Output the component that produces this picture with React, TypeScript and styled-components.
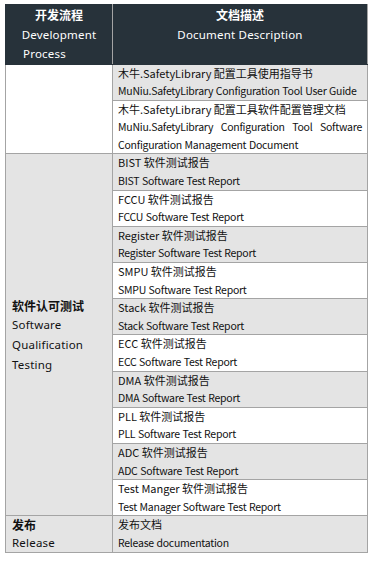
import React from 'react';
import styled, { createGlobalStyle } from 'styled-components';

const GlobalStyle = createGlobalStyle`
  html, body {
    margin: 0;
    padding: 0;
    background: #ffffff;
  }
`;

interface DocRow {
  zh: string;
  en: string;
  justify?: boolean;
}

const setupDocs: DocRow[] = [
  { zh: '木牛.SafetyLibrary 配置工具使用指导书', en: 'MuNiu.SafetyLibrary Configuration Tool User Guide' },
  {
    zh: '木牛.SafetyLibrary 配置工具软件配置管理文档',
    en: 'MuNiu.SafetyLibrary Configuration Tool Software Configuration Management Document',
    justify: true,
  },
];

const testModules = ['BIST', 'FCCU', 'Register', 'SMPU', 'Stack', 'ECC', 'DMA', 'PLL', 'ADC'];

const testDocs: DocRow[] = [
  ...testModules.map((m) => ({ zh: `${m} 软件测试报告`, en: `${m} Software Test Report` })),
  { zh: 'Test Manger 软件测试报告', en: 'Test Manager Software Test Report' },
];

const Page = styled.div`
  padding: 4px 4px 0 5px;
`;

const Table = styled.table`
  width: 363px;
  border-collapse: collapse;
  table-layout: fixed;
  border: 1px solid #a4a4a4;
`;

const HeadCell = styled.th`
  background: #27323a;
  color: #ffffff;
  font-family: 'Noto Sans', 'Noto Sans CJK SC', sans-serif;
  font-size: 11.5px;
  font-weight: 400;
  line-height: 19.5px;
  padding: 0 5px;
  vertical-align: top;
  text-align: center;
  border: 1px solid #27323a;
  border-right-color: #a4a4a4;
`;

const HeadZh = styled.div`
  font-family: 'Noto Sans CJK SC', sans-serif;
  font-weight: 700;
  font-size: 12px;
`;

const HeadEn = styled.div<{ $left?: boolean }>`
  text-align: ${(p) => (p.$left ? 'left' : 'center')};
  padding-left: ${(p) => (p.$left ? '12px' : '0')};
  letter-spacing: 0.2px;
`;

const ProcessCell = styled.td<{ $shade?: boolean; $loose?: boolean }>`
  background: ${(p) => (p.$shade ? '#e4e4e4' : '#ffffff')};
  border: 1px solid #a4a4a4;
  padding: 0 6px;
  vertical-align: middle;
  color: #111;
  font-family: 'Noto Sans', 'Noto Sans CJK SC', sans-serif;
  font-size: 11.5px;
  line-height: ${(p) => (p.$loose ? '19.6px' : '17.6px')};
  letter-spacing: 0.2px;
`;

const ProcessZh = styled.div`
  font-family: 'Noto Sans CJK SC', sans-serif;
  font-weight: 700;
  font-size: 12px;
  letter-spacing: 0;
`;

const DocCell = styled.td<{ $shade?: boolean; $justify?: boolean }>`
  background: ${(p) => (p.$shade ? '#e4e4e4' : '#ffffff')};
  border: 1px solid #a4a4a4;
  padding: 0 5px 0 5px;
  vertical-align: middle;
  color: #111;
  font-family: 'Noto Sans CJK SC', sans-serif;
  font-size: 11px;
  line-height: 17.6px;
  text-align: ${(p) => (p.$justify ? 'justify' : 'left')};
`;

const DocZh = styled.div`
  font-size: 11px;
`;

const DocEn = styled.div`
  font-size: 10.5px;
  letter-spacing: -0.25px;
  word-spacing: 0.5px;
`;

export default function App() {
  return (
    <Page>
      <GlobalStyle />
      <Table>
        <colgroup>
          <col style={{ width: 107 }} />
          <col />
        </colgroup>
        <thead>
          <tr>
            <HeadCell>
              <HeadZh>开发流程</HeadZh>
              <HeadEn>Development</HeadEn>
              <HeadEn $left>Process</HeadEn>
            </HeadCell>
            <HeadCell>
              <HeadZh>文档描述</HeadZh>
              <HeadEn>Document Description</HeadEn>
            </HeadCell>
          </tr>
        </thead>
        <tbody>
          {setupDocs.map((d, i) => (
            <tr key={d.en}>
              {i === 0 && <ProcessCell rowSpan={setupDocs.length} />}
              <DocCell $shade={i % 2 === 0} $justify={d.justify}>
                <DocZh>{d.zh}</DocZh>
                <DocEn>{d.en}</DocEn>
              </DocCell>
            </tr>
          ))}
          {testDocs.map((d, i) => (
            <tr key={d.en}>
              {i === 0 && (
                <ProcessCell rowSpan={testDocs.length} $shade $loose>
                  <ProcessZh>软件认可测试</ProcessZh>
                  <div>Software</div>
                  <div>Qualification</div>
                  <div>Testing</div>
                </ProcessCell>
              )}
              <DocCell $shade={i % 2 === 0}>
                <DocZh>{d.zh}</DocZh>
                <DocEn>{d.en}</DocEn>
              </DocCell>
            </tr>
          ))}
          <tr>
            <ProcessCell $shade>
              <ProcessZh>发布</ProcessZh>
              <div>Release</div>
            </ProcessCell>
            <DocCell $shade>
              <DocZh>发布文档</DocZh>
              <DocEn>Release documentation</DocEn>
            </DocCell>
          </tr>
        </tbody>
      </Table>
    </Page>
  );
}
